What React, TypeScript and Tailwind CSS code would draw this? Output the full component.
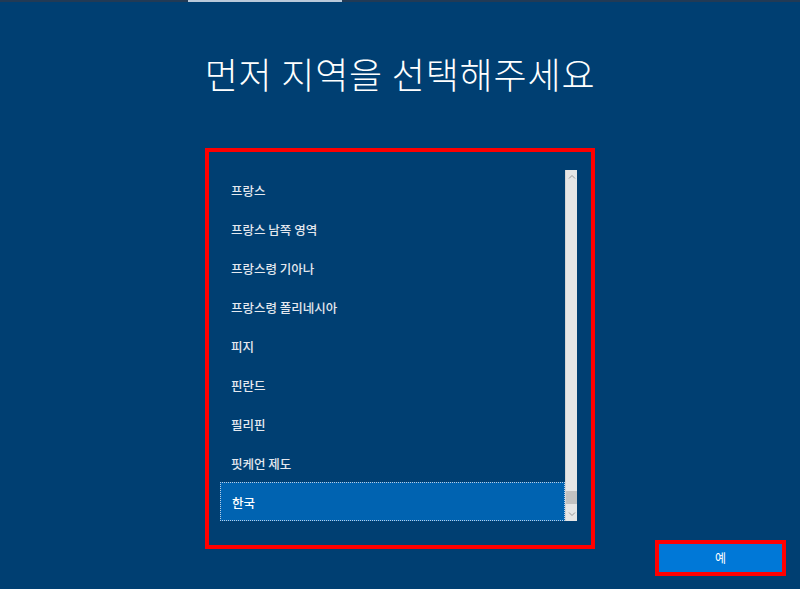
import React, { useState } from "react";

const REGIONS = [
    "프랑스",
    "프랑스 남쪽 영역",
    "프랑스령 기아나",
    "프랑스령 폴리네시아",
    "피지",
    "핀란드",
    "필리핀",
    "핏케언 제도",
    "한국",
];

const FONT = "font-['Noto_Sans_CJK_KR','Noto_Sans',sans-serif]";

export default function App() {
    const [selected, setSelected] = useState("한국");

    return (
        <div className={`w-[800px] h-[589px] bg-[#003f72] flex flex-col overflow-hidden ${FONT}`}>
            {/* progress strip */}
            <div className="h-[2px] bg-[#223a55] flex">
                <div className="ml-[188px] w-[154px] bg-[#b9c9da]" />
            </div>

            {/* Title */}
            <h1 className="mt-[45px] text-center text-[36px] font-light text-white leading-[52px] tracking-[0.8px]">
                먼저 지역을 선택해주세요
            </h1>

            {/* Region list, highlighted */}
            <div className="mt-[49px] mx-auto w-[390px] h-[401px] border-4 border-[#ff0000] pt-[18px] pl-[11px] pr-[14px]">
                <div className="flex h-[351px]">
                    <ul className="flex-1 flex flex-col">
                        {REGIONS.map((name) => {
                            const isSel = name === selected;
                            return (
                                <li
                                    key={name}
                                    onClick={() => setSelected(name)}
                                    className={
                                        "h-[39px] flex items-center pt-[3px] pl-[11px] text-[12.5px] font-medium cursor-pointer " +
                                        (isSel
                                            ? "bg-[#0063b1] text-white border border-dotted border-[#b7cde6] pl-[10px]"
                                            : "text-[#e4e8ee]")
                                    }
                                >
                                    {name}
                                </li>
                            );
                        })}
                    </ul>

                    {/* Scrollbar */}
                    <div className="w-[12px] bg-[#e6e6e6] flex flex-col items-center border-l border-[#d4d4d4]">
                        <svg className="mt-[4px] w-[8px] h-[6px] text-[#9a9a9a]" viewBox="0 0 8 6" fill="none" stroke="currentColor" strokeWidth={1}>
                            <path d="M1 4.5L4 1.5L7 4.5" />
                        </svg>
                        <div className="flex-1" />
                        <div className="w-full h-[13px] bg-[#c2c2c2]" />
                        <svg className="mt-[7px] mb-[4px] w-[8px] h-[6px] text-[#9a9a9a]" viewBox="0 0 8 6" fill="none" stroke="currentColor" strokeWidth={1}>
                            <path d="M1 1.5L4 4.5L7 1.5" />
                        </svg>
                    </div>
                </div>
            </div>

            {/* Footer button */}
            <div className="-mt-[9px] flex justify-end pr-[14px]">
                <div className="w-[131px] h-[36px] border-4 border-[#ff0000]">
                    <button className="w-full h-full bg-[#0078d7] text-white text-[12px] flex items-center justify-center">
                        예
                    </button>
                </div>
            </div>
        </div>
    );
}
